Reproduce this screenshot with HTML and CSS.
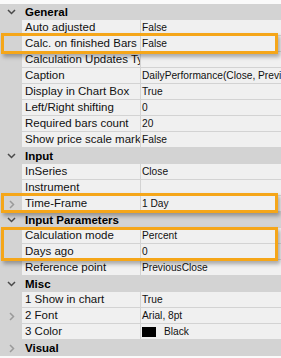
FILE: index.html
```html
<!DOCTYPE html>
<html>
<head>
  <meta charset="utf-8">
  <title>Indicator properties</title>
  <link rel="stylesheet" href="styles.css">
</head>
<body>

<div class="props">

  <div class="cat">
    <span class="exp"><svg width="9" height="6" viewBox="0 0 9 6"><polyline points="1,1 4.5,4.5 8,1" /></svg></span>
    <span class="cat-name">General</span>
  </div>
  <div class="row"><span class="exp"></span><span class="name">Auto adjusted</span><span class="value">False</span></div>
  <div class="row"><span class="exp"></span><span class="name">Calc. on finished Bars</span><span class="value">False</span></div>
  <div class="row"><span class="exp"></span><span class="name">Calculation Updates Type</span><span class="value"></span></div>
  <div class="row"><span class="exp"></span><span class="name">Caption</span><span class="value">DailyPerformance(Close, PreviousClose)</span></div>
  <div class="row"><span class="exp"></span><span class="name">Display in Chart Box</span><span class="value">True</span></div>
  <div class="row"><span class="exp"></span><span class="name">Left/Right shifting</span><span class="value">0</span></div>
  <div class="row"><span class="exp"></span><span class="name">Required bars count</span><span class="value">20</span></div>
  <div class="row"><span class="exp"></span><span class="name">Show price scale marker</span><span class="value">False</span></div>

  <div class="cat">
    <span class="exp"><svg width="9" height="6" viewBox="0 0 9 6"><polyline points="1,1 4.5,4.5 8,1" /></svg></span>
    <span class="cat-name">Input</span>
  </div>
  <div class="row"><span class="exp"></span><span class="name">InSeries</span><span class="value">Close</span></div>
  <div class="row"><span class="exp"></span><span class="name">Instrument</span><span class="value"></span></div>
  <div class="row"><span class="exp sub"><svg width="6" height="9" viewBox="0 0 6 9"><polyline points="1,1 4.5,4.5 1,8" /></svg></span><span class="name">Time-Frame</span><span class="value">1 Day</span></div>

  <div class="cat">
    <span class="exp"><svg width="9" height="6" viewBox="0 0 9 6"><polyline points="1,1 4.5,4.5 8,1" /></svg></span>
    <span class="cat-name">Input Parameters</span>
  </div>
  <div class="row"><span class="exp"></span><span class="name">Calculation mode</span><span class="value">Percent</span></div>
  <div class="row"><span class="exp"></span><span class="name">Days ago</span><span class="value">0</span></div>
  <div class="row"><span class="exp"></span><span class="name">Reference point</span><span class="value">PreviousClose</span></div>

  <div class="cat">
    <span class="exp"><svg width="9" height="6" viewBox="0 0 9 6"><polyline points="1,1 4.5,4.5 8,1" /></svg></span>
    <span class="cat-name">Misc</span>
  </div>
  <div class="row"><span class="exp"></span><span class="name">1 Show in chart</span><span class="value">True</span></div>
  <div class="row"><span class="exp sub"><svg width="6" height="9" viewBox="0 0 6 9"><polyline points="1,1 4.5,4.5 1,8" /></svg></span><span class="name">2 Font</span><span class="value">Arial, 8pt</span></div>
  <div class="row"><span class="exp"></span><span class="name">3 Color</span><span class="value"><span class="swatch"></span>Black</span></div>

  <div class="cat">
    <span class="exp sub"><svg width="6" height="9" viewBox="0 0 6 9"><polyline points="1,1 4.5,4.5 1,8" /></svg></span>
    <span class="cat-name">Visual</span>
  </div>

  <!-- highlight marks drawn over the grid -->
  <div class="mark mark-calc"></div>
  <div class="mark mark-tf"></div>
  <div class="mark mark-params"></div>
</div>

</body>
</html>
```

FILE: styles.css
```css
body {
  margin: 0;
  background: #fafafa;
  font-family: "Liberation Sans", Arial, sans-serif;
  font-size: 11.5px;
  color: #111;
  overflow: hidden;
}
.props {
  position: relative;
  width: 281px;
  margin-top: 4px;
}
.row,
.cat {
  display: grid;
  grid-template-columns: 22px 119px 1fr;
  height: 16px;
  line-height: 16px;
}
.cat {
  background: #d3d3d3;
}
.row .exp {
  background: #d3d3d3;
}
.exp {
  display: flex;
  align-items: center;
  justify-content: center;
  padding-left: 1px;
}
.exp svg polyline {
  fill: none;
  stroke: #4a4a4a;
  stroke-width: 1.5;
}
.exp.sub svg polyline {
  stroke: #9a9a9a;
}
.cat-name {
  grid-column: 2 / 4;
  padding-left: 3px;
  font-weight: bold;
  color: #000;
}
.name,
.value {
  background: #f0f0f0;
  border-bottom: 1px solid #d3d3d3;
  white-space: nowrap;
  overflow: hidden;
  height: 15px;
  line-height: 15px;
}
.name {
  padding-left: 3px;
  border-right: 1px solid #d3d3d3;
}
.value {
  padding-left: 1px;
  font-size: 10.2px;
  display: flex;
  align-items: center;
}
.swatch {
  display: inline-block;
  width: 14px;
  height: 10px;
  background: #000;
  margin-right: 8px;
}
.mark {
  position: absolute;
  left: 1px;
  width: 277px;
  border: 3px solid #f5a619;
  box-sizing: border-box;
  box-shadow: 2px 3px 4px rgba(0, 0, 0, 0.3);
}
.mark-calc {
  top: 29px;
  height: 21px;
}
.mark-tf {
  top: 189px;
  height: 20px;
}
.mark-params {
  top: 223px;
  height: 34px;
}
```
